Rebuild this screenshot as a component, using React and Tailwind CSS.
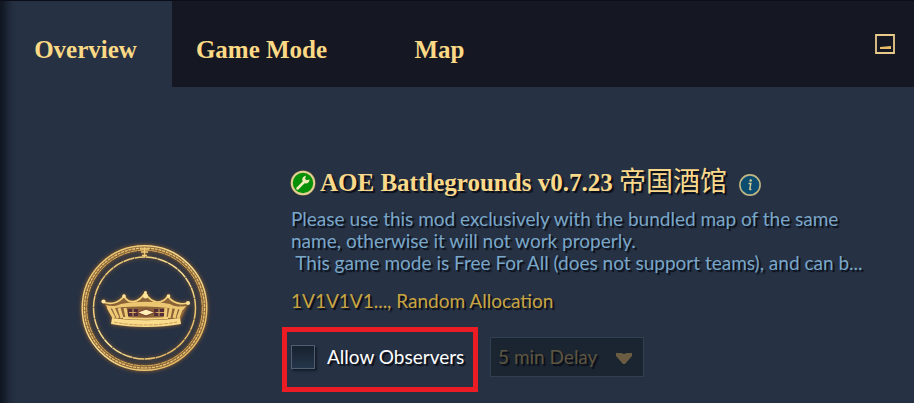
import React from "react";

const shade = "[text-shadow:2px_2px_1px_rgba(5,8,16,0.85)]";

function Emblem() {
  return (
    <svg viewBox="0 0 130 130" className="size-[130px] drop-shadow-[0_0_2px_#9a642c]" fill="none" role="img" aria-label="Crown emblem">
      <defs>
        <linearGradient id="gold" x1="0" y1="0" x2="1" y2="1">
          <stop offset="0" stopColor="#e6ba63" />
          <stop offset="0.5" stopColor="#fbe49a" />
          <stop offset="1" stopColor="#dca94e" />
        </linearGradient>
      </defs>
      <circle cx="64.500" cy="64" r="60" stroke="#8a6538" strokeWidth="5" />
      <circle cx="64.500" cy="64" r="62.300" stroke="url(#gold)" strokeWidth="1.400" />
      <circle cx="64.500" cy="64" r="60" stroke="#e9c574" strokeWidth="1.300" strokeDasharray="3 0.8" />
      <circle cx="64.500" cy="64" r="57.800" stroke="#d8ad5c" strokeWidth="1" strokeDasharray="6 0.8" />
      <circle cx="64.500" cy="64" r="51" stroke="url(#gold)" strokeWidth="1.500" strokeDasharray="11 0.5" />
      <path d="M60 5h9M64.500 4v9M61 8h7M62 11.500h5" stroke="#f0cb78" strokeWidth="1.300" />
      <path d="M24 59c6 3 16 1 20-6 4 8 14 7 21-3 7 10 17 11 23 3 4 7 13 9 20 7l-8 17c-20 4-47 4-66 0z" fill="#8b6339" />
      <path d="M23 58c8 3 16 1 21-6 4 8 14 8 21-3 7 11 17 12 23 3 4 7 13 9 20 7" stroke="#f4d27c" strokeWidth="1.700" />
      <path d="M26 61c6 2 11 1 15-1 16-3 33-3 49 0 5 3 10 3 16 2l-3 4c-22-4-53-5-75-1z" fill="#edc671" />
      <path d="M32 74c20 3 48 3 68 0l1 6c-22 4-48 4-70 0z" fill="#f9dc8c" />
      <path d="M34 78c18 4 43 4 63 0" stroke="#c2914b" strokeWidth="0.800" strokeDasharray="4 1" />
      <path d="M28 63l6 11M33 63l5 11M39 64l3 10M45 64l2 10M86 64l-1 10M91 64l-2 10M97 63l-3 11M102 63l-4 11" stroke="#efca75" strokeWidth="3" />
      <path d="M48 65h10v7H48zM74 65h10v7H74z" fill="#4f2c38" />
      <path d="M49 68.500h35M53 65v7M79 65v7" stroke="#d5aa5f" strokeWidth="1" />
      <path d="M57 68.500l9-3.500 9 3.500-9 3.500z" fill="#fff0b5" stroke="#7d4533" strokeWidth="1.200" />
      <path d="M43 74c14 1 30 1 45 0" stroke="#f4d27c" strokeWidth="2" />
      <g fill="#ffe49b">
        <circle cx="65.500" cy="52" r="2.500" />
        <circle cx="65.500" cy="48.500" r="1.500" />
        <circle cx="44" cy="52" r="1.800" />
        <circle cx="88.500" cy="52" r="1.800" />
        <circle cx="23.500" cy="57.500" r="2.100" />
        <circle cx="108" cy="59" r="2.100" />
      </g>
    </svg>
  );
}

function ModIcon() {
  return (
    <svg viewBox="0 0 26 26" className="size-[26px] shrink-0" aria-hidden="true">
      <circle cx="13" cy="13" r="12.800" fill="#57513c" />
      <circle cx="13" cy="13" r="11.200" fill="#079109" stroke="#e5d094" strokeWidth="2" />
      <path d="M7.500 18.500l7-7" stroke="#f3edba" strokeWidth="2.500" strokeLinecap="round" />
      <path d="M19.500 9.500l-3 .7-1.400-1.400.8-3c-2.300.2-4 2-3.600 4.400.3 2 2 3.400 4 3.200 1.900-.1 3.200-1.800 3.200-3.900z" fill="#f3edba" />
    </svg>
  );
}

function InfoIcon() {
  return (
    <svg viewBox="0 0 22 22" className="size-[22px]" aria-hidden="true">
      <circle cx="11" cy="11" r="10.100" fill="#0b4c70" stroke="#c0b782" strokeWidth="1.600" />
      <circle cx="11.700" cy="6.500" r="1.200" fill="#d8cc93" />
      <path d="M9.500 9.500h2.300l-1 5.500c0 .7.700.6 1.500.1" fill="none" stroke="#d8cc93" strokeWidth="1.400" />
    </svg>
  );
}

export default function App() {
  return (
    <div className="min-h-screen bg-[#263143] font-['Lato','Noto_Sans_CJK_SC',sans-serif] shadow-[inset_14px_0_10px_-8px_#0e141f]">
      <header className="flex h-[87px] border-t border-[#0b0e18] font-['Liberation_Serif',serif] text-[25px] font-bold text-[#fbd985]">
        <nav className="flex" aria-label="Lobby sections">
          <button className="w-[172px] pt-3 pr-px">Overview</button>
          <button className="w-[178px] bg-[#151722] pt-3 pl-px">Game Mode</button>
          <button className="w-[178px] bg-[#151722] pt-3 pl-px">Map</button>
        </nav>
        <div className="flex flex-1 items-center justify-end bg-[#151722] pr-[18px]">
          <button aria-label="Minimise">
            <svg viewBox="0 0 22 22" className="size-[22px]" fill="none" aria-hidden="true">
              <path d="M2 2h18v18H2z" stroke="#e7c98a" strokeWidth="1.800" />
              <path d="M6 14l11-1v3H6z" fill="#e9bd68" />
            </svg>
          </button>
        </div>
      </header>

      <main className="flex pt-[79px]">
        <aside className="w-[290px] shrink-0 pt-[78px] pl-[80px]">
          <Emblem />
        </aside>
        <section className="min-w-0 flex-1 pr-6">
          <div className="flex items-center gap-1">
            <ModIcon />
            <h1 className={`font-['Liberation_Serif','Noto_Sans_CJK_SC',serif] text-[25px] leading-8 font-bold text-[#fbd98b] ${shade}`}>
              AOE Battlegrounds v0.7.23 <span className="text-[27px] font-normal">帝国酒馆</span>
            </h1>
            <button className="ml-2 pt-1" aria-label="Mod information"><InfoIcon /></button>
          </div>
          <p className={`mt-[9px] pl-px text-[19px] leading-[22px] whitespace-pre text-[#7aa7c9] ${shade}`}>
            {"Please use this mod exclusively with the bundled map of the same\nname, otherwise it will not work properly.\n This game mode is Free For All (does not support teams), and can b..."}
          </p>
          <p className={`mt-4 pl-px text-[19px] leading-[22px] text-[#c9a542] ${shade}`}>1V1V1V1..., Random Allocation</p>
          <div className="mt-[15px] -ml-2 flex items-start gap-3">
            <label className={`flex h-[65px] w-[196px] items-center gap-3 border-[5px] border-[#ec1c24] pb-[5px] pl-1 text-[19px] whitespace-nowrap text-white ${shade}`}>
              <input type="checkbox" className="size-6 shrink-0 appearance-none border border-[#4e6072] bg-linear-to-b from-[#17212f] to-[#25364a] shadow-[2px_2px_2px_#151c29] checked:bg-[#c9a542]" />
              Allow Observers
            </label>
            <div className="relative mt-[10px]">
              <select aria-label="Observer delay" disabled className={`h-10 w-[154px] appearance-none border border-[#30404f] bg-[#1b2532] pl-[7px] text-[19px] text-[#5e5540] opacity-100 ${shade}`}>
                <option>5 min Delay</option>
              </select>
              <svg viewBox="0 0 16 12" className="pointer-events-none absolute top-[15px] right-3 h-3 w-4" aria-hidden="true">
                <path d="M0 1h5l3 1 3-1h5v3l-7 8H7L0 4z" fill="#6a5d42" />
              </svg>
            </div>
          </div>
        </section>
      </main>
    </div>
  );
}
